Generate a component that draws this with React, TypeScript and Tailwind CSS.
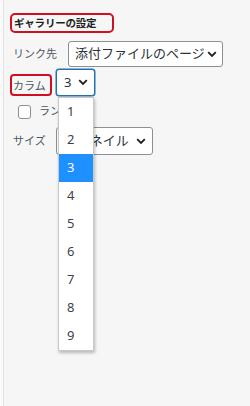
import React from "react";

const font = { fontFamily: '"Noto Sans", "Noto Sans CJK JP", sans-serif' };

const Chevron = () => (
  <svg width="10" height="7" viewBox="0 0 10 7" className="shrink-0">
    <path d="M1.2 1.2 L5 5 L8.8 1.2" fill="none" stroke="#1e1e1e" strokeWidth="1.8" />
  </svg>
);

const options = [1, 2, 3, 4, 5, 6, 7, 8, 9];

export default function App() {
  return (
    <div className="w-[250px] h-[406px] bg-[#f6f6f6] flex text-[#50575e]" style={font}>
      <div className="w-[4px] bg-[#fafafa] border-r border-[#e4e4e4] shrink-0" />
      <div className="relative flex-1 pl-[6px] pt-[13px]">
        {/* heading */}
        <div className="w-[104px] h-[20px] border-2 border-[#cf1020] rounded-[5px] pl-[2px] flex items-center">
          <span className="text-[10.5px] font-bold text-[#1e1e1e] leading-none tracking-[-0.2px]">ギャラリーの設定</span>
        </div>

        {/* link to */}
        <div className="flex items-center mt-[8px] h-[26px]">
          <span className="w-[58px] pl-[3px] text-[11px]">リンク先</span>
          <div className="w-[155px] h-[26px] bg-white border border-[#8c8f94] rounded-[3px] flex items-center justify-between pl-[6px] pr-[5px]">
            <span className="text-[13px] text-[#2c3338] whitespace-nowrap">添付ファイルのページ</span>
            <Chevron />
          </div>
        </div>

        {/* columns */}
        <div className="flex items-center mt-[2px] h-[27px]">
          <div className="w-[42px] h-[22px] mt-[5px] border-2 border-[#cf1020] rounded-[4px] pl-[1px] flex items-center">
            <span className="text-[11px] leading-none">カラム</span>
          </div>
          <div className="ml-[4px] w-[39px] h-[27px] bg-white border border-[#2271b1] shadow-[0_0_0_0.5px_#2271b1] rounded-[3px] flex items-center justify-between pl-[7px] pr-[6px]">
            <span className="text-[13px] text-[#2c3338]">3</span>
            <Chevron />
          </div>
        </div>

        {/* random order */}
        <div className="flex items-center mt-[8px] h-[15px] pl-[8px]">
          <div className="w-[13px] h-[14px] bg-white border border-[#8c8f94] rounded-[3px]" />
          <span className="ml-[8px] text-[11px]">ランダム順</span>
        </div>

        {/* size */}
        <div className="flex items-center mt-[8px] h-[28px]">
          <span className="w-[46px] pl-[3px] text-[11px]">サイズ</span>
          <div className="w-[97px] h-[28px] bg-white border border-[#8c8f94] rounded-[3px] flex items-center justify-between pl-[7px] pr-[6px]">
            <span className="text-[13px] text-[#2c3338] whitespace-nowrap">サムネイル</span>
            <Chevron />
          </div>
        </div>

        {/* open dropdown */}
        <div className="absolute left-[54px] top-[97px] w-[36px] bg-white border border-[#c8c8c8] shadow-[1px_2px_3px_rgba(0,0,0,0.25)] py-0">
          {options.map((n) => (
            <div
              key={n}
              className={
                n === 3
                  ? "h-[28px] flex items-center pl-[8px] text-[13px] bg-[#1e90ff] text-white"
                  : "h-[28px] flex items-center pl-[8px] text-[13px] text-[#3c434a]"
              }
            >
              {n}
            </div>
          ))}
        </div>
      </div>
    </div>
  );
}
